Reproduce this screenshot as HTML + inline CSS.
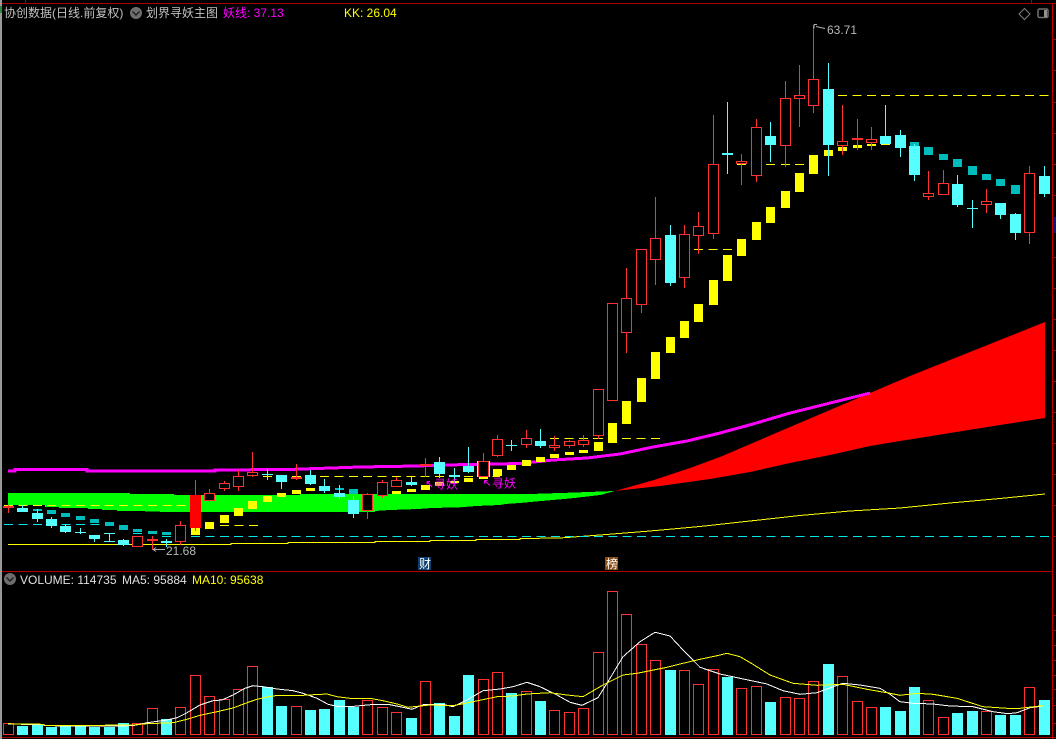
<!DOCTYPE html>
<html lang="zh"><head><meta charset="utf-8"><title>协创数据</title>
<style>
html,body{margin:0;padding:0;background:#000;width:1056px;height:739px;overflow:hidden}
svg{display:block;position:absolute;left:0;top:0}
text{font-family:"Liberation Sans","WenQuanYi Zen Hei","Noto Sans CJK SC",sans-serif;font-size:12px}
</style></head><body>
<svg width="1056" height="739" viewBox="0 0 1056 739" xmlns="http://www.w3.org/2000/svg">
<rect width="1056" height="739" fill="#000"/>
<g shape-rendering="crispEdges">
<!-- frame -->
<rect x="0" y="0" width="2" height="739" fill="#9a9a9a"/>
<rect x="0" y="6" width="2" height="7" fill="#2a8a3a"/>
<rect x="2" y="3" width="1054" height="1" fill="#a80000"/>
<rect x="2" y="571" width="1050" height="1" fill="#b00000"/>
<rect x="2" y="737" width="1054" height="1" fill="#a80000"/>
<rect x="25" y="0" width="1" height="3" fill="#a00000"/>
<rect x="1031" y="0" width="1" height="3" fill="#a00000"/>
<rect x="1052" y="3" width="1" height="736" fill="#c00000"/>
<path d="M1052 39.500h4M1052 70.500h4M1052 102.500h4M1052 133.500h4M1052 164.500h4M1052 195.500h4M1052 257.500h4M1052 288.500h4M1052 319.500h4M1052 350.500h4M1052 381.500h4M1052 412.500h4M1052 443.500h4M1052 474.500h4M1052 505.500h4M1052 536.500h4M1052 615.500h4M1052 630.500h4M1052 645.500h4M1052 660.500h4M1052 675.500h4M1052 689.500h4M1052 705.500h4M1052 723.500h4" stroke="#a00000" stroke-width="1" fill="none"/>
<rect x="1053" y="217" width="3" height="16" fill="#101080"/>
<!-- green band -->
<path d="M8 493H130V494H174V495H300V494H530L575 492.500L615 491L600 495L570 498.500L530 502L520 503L505 504L500 505L476 506L460 507.300L432 508L418 509L390 510L375 511V512H200L160 512V511.500H145V511H117V510H102V509H88V508H59V507H45V505H8Z" fill="#00ff00"/>
</g>
<!-- red band -->
<path d="M615 491L654 480L690 468L720 457L755 442L790 427L830 410L870 393L910 376L950 360L1000 340L1045 322V418L1000 425L950 433L900 441L870 446L830 455L790 463L750 472L710 479L660 486Z" fill="#ff0000"/>
<g shape-rendering="crispEdges">
<!-- magenta -->
<polyline points="8,471 15,471 15,469.500 87,469.500 87,471 215,471 215,470 288,469.500 317,468.500 360,467 417,466 445,465 520,463.500 553,460 587,458 620,454 653,447 687,441 720,433 753,424 790,413 830,403 870,393" fill="none" stroke="#ff00ff" stroke-width="3"/>
<!-- thin lines -->
<polyline points="8,544.500 231,544.500 231,543.500 288,543.500 288,542.500 375,542.500 375,541.500 430,541.500 430,540.500 476,540.500 476,539.500 520,539.500 520,538.500 560,538 600,535 650,531 700,526.500 750,521 800,515.500 850,511 900,508 950,503 1000,498.500 1045,494" fill="none" stroke="#ffff00" stroke-width="1"/>
<!-- dashes -->
<g stroke="#ffff00" stroke-width="1" fill="none" stroke-dasharray="9 5.39">
<path d="M4 505.500H186"/><path d="M220 525.500H258"/><path d="M320 476.500H500"/><path d="M263 476.500H272M292 476.500H301"/>
<path d="M550 438.500H595"/><path d="M594 438.500H603"/><path d="M622 438.500H660"/><path d="M694 249.500H732"/>
<path d="M737 164.500H746M766 164.500H775M781 164.500H790M795 164.500H804"/><path d="M838 95.500H1050"/>
</g>
<g stroke="#00e8e8" stroke-width="1" fill="none" stroke-dasharray="9 5.39">
<path d="M4 524.500H100"/><path d="M191 536.500H1050"/><path d="M133 533.500H142M162 536.500H171"/>
</g>
<!-- yellow bars -->
<rect x="477" y="461" width="13" height="16" fill="#ffff00"/>
<path fill="#ffff00" d="M191 528h9v7h-9zM205 522h9v7h-9zM220 515h9v8h-9zM234 508h9v8h-9zM248 501h9v8h-9zM263 496h9v6h-9zM277 493h9v4h-9zM292 490h9v4h-9zM306 488h9v3h-9zM392 491h9v3h-9zM407 489h9v3h-9zM421 485h9v5h-9zM435 482h9v4h-9zM450 481h9v2h-9zM464 478h9v4h-9zM479 477h9v2h-9zM493 469h9v7h-9zM507 465h9v5h-9zM522 460h9v6h-9zM536 457h9v5h-9zM550 454h9v4h-9zM565 452h9v3h-9zM579 450h9v3h-9zM594 442h9v9h-9zM608 423h9v20h-9zM622 401h9v23h-9zM637 378h9v24h-9zM651 352h9v27h-9zM666 337h9v16h-9zM680 321h9v17h-9zM694 304h9v18h-9zM709 280h9v25h-9zM723 255h9v26h-9zM737 239h9v17h-9zM752 222h9v18h-9zM766 207h9v16h-9zM781 191h9v17h-9zM795 173h9v19h-9zM809 155h9v19h-9zM824 150h9v6h-9zM838 147h9v4h-9zM853 145h9v3h-9zM867 144h9v2h-9zM881 144h9v1h-9z"/>
<!-- teal bars -->
<path fill="#00bcbc" d="M33 509h9v2h-9zM47 510h9v4h-9zM61 513h9v4h-9zM76 516h9v4h-9zM90 519h9v4h-9zM105 522h9v4h-9zM119 525h9v5h-9zM133 529h9v3h-9zM148 531h9v3h-9zM162 532h9v3h-9zM335 488h9v2h-9zM349 489h9v5h-9zM910 142h9v4h-9zM924 147h9v8h-9zM939 154h9v6h-9zM953 159h9v8h-9zM968 166h9v9h-9zM982 174h9v6h-9zM996 179h9v7h-9zM1011 185h9v9h-9z"/>
<!-- cyan wicks -->
<path stroke="#55ffff" stroke-width="1" fill="none" d="M22.500 505V512M37.500 509V522M51.500 517V528M65.500 524V533M80.500 528V534M94.500 535V542M109.500 533V541M123.500 539V546M166.500 539V547M267.500 469V480M281.500 475V489M310.500 470V485M324.500 479V493M339.500 485V499M353.500 496V518M411.500 477V486M439.500 457V478M454.500 468V483M468.500 447V473M511.500 440V451M540.500 429V448M670.500 225V286M727.500 102V174M770.500 122V162M828.500 63V176M885.500 105V144M900.500 130V157M914.500 144V181M957.500 175V207M972.500 200V228M1000.500 203V219M1015.500 213V240M1044.500 166V197"/>
<!-- cyan bodies -->
<path fill="#55ffff" d="M17 508h11v4h-11zM32 513h11v6h-11zM46 519h11v7h-11zM60 526h11v6h-11zM75 532h11v1h-11zM89 535h11v4h-11zM104 533h11v1h-11zM104 541h11v1h-11zM118 540h11v5h-11zM161 541h11v2h-11zM262 474h11v1h-11zM276 475h11v7h-11zM305 475h11v9h-11zM319 486h11v5h-11zM334 493h11v4h-11zM348 500h11v14h-11zM406 482h11v3h-11zM434 462h11v12h-11zM449 475h11v2h-11zM463 466h11v6h-11zM506 445h11v1h-11zM535 441h11v5h-11zM665 235h11v48h-11zM722 153h11v2h-11zM765 136h11v9h-11zM823 89h11v56h-11zM880 136h11v8h-11zM895 135h11v13h-11zM909 146h11v29h-11zM952 184h11v21h-11zM967 208h11v1h-11zM995 203h11v12h-11zM1010 214h11v19h-11zM1039 176h11v18h-11z"/>
<!-- red wicks -->
<path stroke="#ff3232" stroke-width="1" fill="none" d="M8.500 505V513M152.500 536V550M180.500 521V545M195.500 480V531M209.500 489V502M224.500 481V491M238.500 470V491M252.500 452V477M296.500 464V480M367.500 493V519M382.500 480V498M396.500 477V487M425.500 458V477M483.500 453V477M497.500 435V457M526.500 430V448M554.500 436V451M569.500 440V448M583.500 435V447M598.500 389V439M626.500 268V353M641.500 249V313M655.500 197V285M684.500 225V288M698.500 212V254M713.500 115V239M741.500 154V185M756.500 119V182M785.500 81V167M799.500 65V127M813.500 25V113M842.500 105V155M857.500 119V150M871.500 127V150M928.500 171V200M943.500 170V183M986.500 189V213M1029.500 166V244"/>
<!-- red filled -->
<path fill="#ff2a2a" d="M3 506h11v2h-11zM147 539h11v2h-11zM291 477h11v2h-11zM420 464h11v2h-11zM852 138h11v2h-11z"/>
<rect x="190" y="495" width="11" height="33" fill="#ff0000"/>
<!-- red boxes -->
<path fill="#000" stroke="#ff3232" stroke-width="1" d="M132.500 536.500h10v10h-10zM175.500 525.500h10v16h-10zM204.500 493.500h10v7h-10zM219.500 483.500h10v5h-10zM233.500 476.500h10v10h-10zM247.500 472.500h10v3h-10zM362.500 494.500h10v16h-10zM377.500 482.500h10v13h-10zM391.500 480.500h10v6h-10zM478.500 461.500h10v15h-10zM492.500 439.500h10v16h-10zM521.500 438.500h10v6h-10zM549.500 445.500h10v2h-10zM564.500 441.500h10v4h-10zM578.500 440.500h10v4h-10zM593.500 389.500h10v46h-10zM607.500 303.500h10v97h-10zM621.500 298.500h10v34h-10zM636.500 249.500h10v55h-10zM650.500 238.500h10v21h-10zM679.500 234.500h10v43h-10zM693.500 226.500h10v9h-10zM708.500 164.500h10v69h-10zM736.500 161.500h10v2h-10zM751.500 127.500h10v48h-10zM780.500 98.500h10v47h-10zM794.500 95.500h10v3h-10zM808.500 79.500h10v26h-10zM837.500 141.500h10v4h-10zM866.500 139.500h10v3h-10zM923.500 193.500h10v3h-10zM938.500 183.500h10v11h-10zM981.500 201.500h10v3h-10zM1024.500 173.500h10v59h-10z"/>
<!-- volume cyan -->
<path fill="#55ffff" d="M17 726h11v9h-11zM32 725h11v10h-11zM46 727h11v8h-11zM60 725h11v10h-11zM75 725h11v10h-11zM89 727h11v8h-11zM104 727h11v8h-11zM118 723h11v12h-11zM161 719h11v16h-11zM262 687h11v48h-11zM276 706h11v29h-11zM305 710h11v25h-11zM319 709h11v26h-11zM334 700h11v35h-11zM348 707h11v28h-11zM406 718h11v17h-11zM434 703h11v32h-11zM449 716h11v19h-11zM463 675h11v60h-11zM506 693h11v42h-11zM535 701h11v34h-11zM665 670h11v65h-11zM722 677h11v58h-11zM765 702h11v33h-11zM823 664h11v71h-11zM880 707h11v28h-11zM895 711h11v24h-11zM909 687h11v48h-11zM952 713h11v22h-11zM967 711h11v24h-11zM995 715h11v20h-11zM1010 715h11v20h-11zM1039 700h11v35h-11z"/>
<!-- volume red -->
<path fill="none" stroke="#ff3232" stroke-width="1" d="M3.500 723.500h10v11h-10zM132.500 723.500h10v11h-10zM147.500 708.500h10v26h-10zM175.500 707.500h10v27h-10zM190.500 675.500h10v59h-10zM204.500 696.500h10v38h-10zM219.500 699.500h10v35h-10zM233.500 689.500h10v45h-10zM247.500 666.500h10v68h-10zM291.500 706.500h10v28h-10zM362.500 700.500h10v34h-10zM377.500 707.500h10v27h-10zM391.500 712.500h10v22h-10zM420.500 681.500h10v53h-10zM478.500 679.500h10v55h-10zM492.500 672.500h10v62h-10zM521.500 691.500h10v43h-10zM549.500 710.500h10v24h-10zM564.500 712.500h10v22h-10zM578.500 708.500h10v26h-10zM593.500 652.500h10v82h-10zM607.500 591.500h10v143h-10zM621.500 614.500h10v120h-10zM636.500 644.500h10v90h-10zM650.500 660.500h10v74h-10zM679.500 670.500h10v64h-10zM693.500 684.500h10v50h-10zM708.500 669.500h10v65h-10zM736.500 688.500h10v46h-10zM751.500 686.500h10v48h-10zM780.500 697.500h10v37h-10zM794.500 698.500h10v36h-10zM808.500 681.500h10v53h-10zM837.500 676.500h10v58h-10zM852.500 701.500h10v33h-10zM866.500 707.500h10v27h-10zM923.500 700.500h10v34h-10zM938.500 717.500h10v17h-10zM981.500 711.500h10v23h-10zM1024.500 687.500h10v47h-10z"/>
<!-- volume MAs -->
<polyline fill="none" stroke="#ffffff" stroke-width="1" points="8,724 43,724.700 45,725.700 100,726 133,725.700 147,722.700 167,720 177,717.700 187,712.700 200,705 213,700.700 222,700 233,695 245,688.300 253,685.700 263,686.700 277,689 293,690.700 303,693.300 317,698.300 328,704.300 337,706.300 350,706.700 360,705.700 375,704.300 390,704.700 400,706.700 412,709.300 423,704.700 443,704.300 453,706.700 467,700 483,690.700 500,689 513,686.700 527,682.300 540,686.700 557,695 570,702.300 582,705.300 598,697.700 607,683.300 623,656.700 640,641.700 655,632.300 670,636 683,650 700,667.300 720,674 740,678.300 767,684 783,690.700 800,694.300 817,692.700 833,686.700 843,683.300 860,685 880,688.300 890,694.300 900,701.700 913,703.300 933,704 950,706 973,706.700 993,711.700 1008,713.700 1017,712.700 1030,707.700 1043,706"/>
<polyline fill="none" stroke="#ffff00" stroke-width="1" points="8,723.700 43,724.300 45,725.300 100,725.300 133,725 147,723.700 173,722.700 187,719.300 200,715.300 217,711.700 233,708 247,702.700 257,699.300 267,697 278,695.300 303,695.300 327,694 337,696.700 350,698.300 370,698.300 383,700.700 397,704 408,707.300 430,705 453,705.700 473,701.700 497,696.700 513,696 527,694 550,692.700 567,695 583,696.700 603,685 623,675 637,673.300 667,667.300 683,663.300 700,659.300 717,655.700 727,653.300 740,656.700 753,664.300 770,675 793,683.300 817,685.300 843,684.300 867,689.300 890,693.300 900,695.300 917,693.300 933,694.300 957,698.300 983,706.700 1007,708.300 1020,708.300 1043,705.700"/>
</g>
<!-- markers -->
<path d="M814 24.500h3M814 24.500v4M816 26.500L825 28.500" stroke="#b0b0b0" stroke-width="1" fill="none"/>
<text x="827" y="34" fill="#b8b8b8">63.71</text>
<path d="M153 549.500H165M153 549.500l3 -2M153 549.500l3 2" stroke="#b0b0b0" stroke-width="1" fill="none"/>
<text x="166" y="555" fill="#b8b8b8">21.68</text>
<!-- magenta labels -->
<path d="M432 487L427 481.500M427 481.500h3M427 481.500v3" stroke="#ff00ff" stroke-width="1" fill="none"/>
<text x="434" y="488.500" fill="#ff00ff">寻妖</text>
<path d="M490 485.500L484.500 480.500M484.500 480.500h3M484.500 480.500v3" stroke="#ff00ff" stroke-width="1" fill="none"/>
<text x="492" y="487.500" fill="#ff00ff">寻妖</text>
<!-- badges -->
<rect x="418" y="557" width="13" height="13" fill="#0a3f70" shape-rendering="crispEdges"/>
<text x="419" y="568" fill="#ffffff">财</text>
<rect x="605" y="557" width="13" height="13" fill="#8a4a12" shape-rendering="crispEdges"/>
<text x="606" y="568" fill="#ffffff">榜</text>
<!-- header -->
<text x="4" y="17" fill="#c0c0c0">协创数据(日线.前复权)</text>
<circle cx="136" cy="13" r="6" fill="#6e6e6e"/>
<path d="M132.500 11.500L136 15L139.500 11.500" stroke="#222" stroke-width="1.500" fill="none"/>
<text x="146" y="17" fill="#c0c0c0">划界寻妖主图</text>
<text x="223" y="17" fill="#ff00ff">妖线: 37.13</text>
<text x="344" y="17" fill="#ffff00">KK: 26.04</text>
<!-- top right icons -->
<path d="M1024.500 8.500L1030 14L1024.500 19.500L1019 14Z" stroke="#808080" stroke-width="1" fill="none"/>
<rect x="1038" y="9" width="10" height="8.500" rx="1.500" fill="none" stroke="#707070" stroke-width="1.500"/>
<rect x="1044" y="10" width="3" height="7" fill="#909090"/>
<!-- volume legend -->
<circle cx="10" cy="579" r="6" fill="#6e6e6e"/>
<path d="M6.500 577.500L10 581L13.500 577.500" stroke="#222" stroke-width="1.500" fill="none"/>
<text x="20" y="584" fill="#e0e0e0">VOLUME: 114735</text>
<text x="122" y="584" fill="#e0e0e0">MA5: 95884</text>
<text x="192" y="584" fill="#ffff00">MA10: 95638</text>
</svg>
</body></html>
